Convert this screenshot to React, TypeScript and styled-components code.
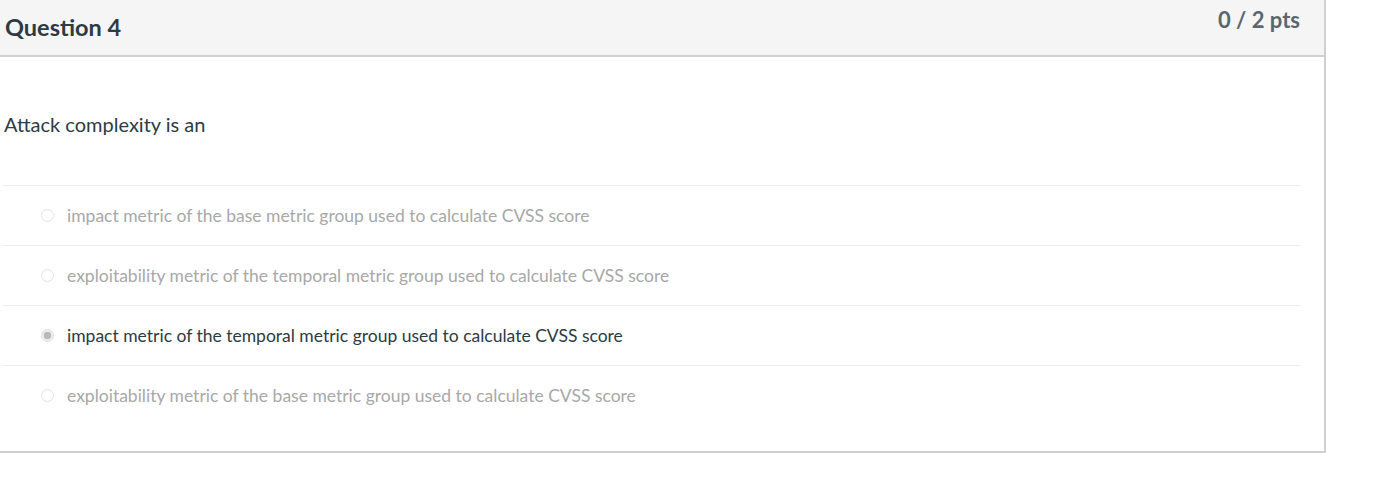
import { createGlobalStyle } from "styled-components";
import styled from "styled-components";

const GlobalStyle = createGlobalStyle`
  body {
    margin: 0;
    background: #fff;
    font-family: Lato, "Open Sans", sans-serif;
    color: #2d3b45;
  }
`;

const Card = styled.div`
  width: 1327px;
  margin-left: -1px;
  border-style: solid;
  border-width: 0 2px 2px 1px;
  border-color: #d0d0d0;
  box-sizing: border-box;
`;

const Header = styled.div`
  height: 57px;
  box-sizing: border-box;
  background: #f5f5f5;
  border-bottom: 2px solid #d0d0d0;
  display: flex;
  justify-content: space-between;
  align-items: flex-start;
  padding: 0 24px 0 5px;
`;

const Title = styled.h2`
  margin: 13px 0 0;
  font-size: 23.5px;
  line-height: 28px;
  font-weight: 700;
  color: #2d3b45;
`;

const Points = styled.div`
  margin-top: 7px;
  font-size: 22px;
  line-height: 26px;
  font-weight: 700;
  color: #5b6770;
`;

const Body = styled.div`
  padding: 55px 24px 26px 3px;
`;

const Prompt = styled.p`
  margin: 0 0 49px 1px;
  font-size: 20px;
  line-height: 24px;
  color: #2d3b45;
`;

const Answers = styled.div`
  display: flex;
  flex-direction: column;
`;

const Row = styled.div<{ selected?: boolean }>`
  height: 60px;
  box-sizing: border-box;
  border-top: 1px solid #ededed;
  display: flex;
  align-items: center;
  padding-left: 38px;
  gap: 13px;
  font-size: 17.5px;
  color: ${(p) => (p.selected ? "#2d3b45" : "#a8a8a8")};
`;

const Radio = styled.span<{ selected?: boolean }>`
  width: 13px;
  height: 13px;
  border-radius: 50%;
  box-sizing: border-box;
  border: 1px solid #e2e2e2;
  background: ${(p) =>
    p.selected ? "radial-gradient(circle, #b9b9b9 0 3.5px, #ececec 4px)" : "#fff"};
  flex-shrink: 0;
`;

const answers = [
  { text: "impact metric of the base metric group used to calculate CVSS score" },
  { text: "exploitability metric of the temporal metric group used to calculate CVSS score" },
  { text: "impact metric of the temporal metric group used to calculate CVSS score", selected: true },
  { text: "exploitability metric of the base metric group used to calculate CVSS score" },
];

export default function App() {
  return (
    <>
      <GlobalStyle />
      <Card>
        <Header>
          <Title>Question 4</Title>
          <Points>0 / 2 pts</Points>
        </Header>
        <Body>
          <Prompt>Attack complexity is an</Prompt>
          <Answers>
            {answers.map((a) => (
              <Row key={a.text} selected={a.selected}>
                <Radio selected={a.selected} />
                {a.text}
              </Row>
            ))}
          </Answers>
        </Body>
      </Card>
    </>
  );
}
